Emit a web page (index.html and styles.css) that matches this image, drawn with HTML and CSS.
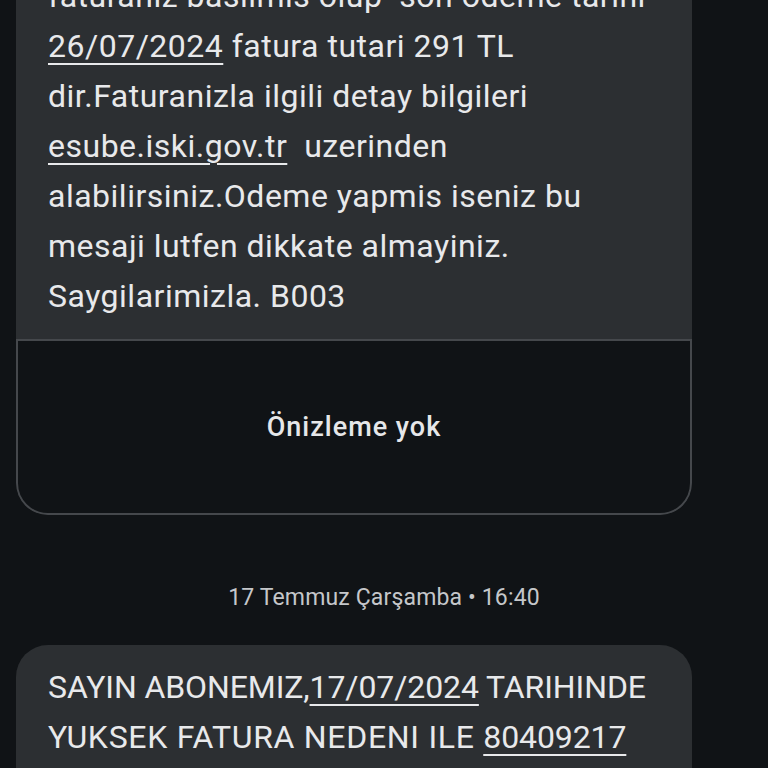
FILE: index.html
```html
<!DOCTYPE html>
<html lang="tr">
<head>
<meta charset="utf-8">
<title>Mesajlar</title>
<link rel="stylesheet" href="styles.css">
</head>
<body>
<main class="thread">
  <article class="bubble bubble-first">
    <p class="msg-text">faturaniz basilmis olup&nbsp; son odeme tarihi<br><span class="link">26/07/2024</span> fatura tutari 291 TL<br>dir.Faturanizla ilgili detay bilgileri<br><span class="link">esube.iski.gov.tr</span>&nbsp; uzerinden<br>alabilirsiniz.Odeme yapmis iseniz bu<br>mesaji lutfen dikkate almayiniz.<br>Saygilarimizla. B003</p>
    <div class="preview">Önizleme yok</div>
  </article>

  <div class="date">17 Temmuz Çarşamba • 16:40</div>

  <article class="bubble bubble-last">
    <p class="msg-text caps">SAYIN ABONEMIZ,<span class="link">17/07/2024</span> TARIHINDE<br><span class="wide">YUKSEK FATURA NEDENI ILE </span><span class="link">80409217</span></p>
  </article>
</main>
</body>
</html>
```

FILE: styles.css
```css
html, body {
  margin: 0;
  padding: 0;
  height: 768px;
  overflow: hidden;
  background: #101316;
}

body {
  font-family: Roboto, "Noto Sans", "Liberation Sans", sans-serif;
  color: #e8e9eb;
}

.thread {
  display: flex;
  flex-direction: column;
  padding-left: 16px;
}

.bubble {
  width: 676px;
  background: #2c2f32;
  border-radius: 32px;
  overflow: hidden;
}

.bubble-first {
  margin-top: -46px;
}

.bubble-last {
  min-height: 300px;
}

.msg-text {
  margin: 0;
  padding: 17px 32px 18px;
  font-size: 32px;
  line-height: 50px;
  letter-spacing: 0.5px;
}

.msg-text.caps {
  letter-spacing: -0.1px;
}

.wide {
  letter-spacing: 0.7px;
}

.link {
  text-decoration: underline;
  text-decoration-thickness: 2px;
  text-underline-offset: 6px;
}

.preview {
  height: 172px;
  background: #101316;
  border: 2px solid #45484c;
  border-radius: 0 0 32px 32px;
  display: flex;
  align-items: center;
  justify-content: center;
  font-size: 27px;
  font-weight: 500;
  letter-spacing: 1px;
  color: #e6e7e9;
}

.date {
  margin: 68px 0 32px -16px;
  text-align: center;
  font-size: 23px;
  line-height: 30px;
  letter-spacing: 0.15px;
  color: #c5c7ca;
}
```
